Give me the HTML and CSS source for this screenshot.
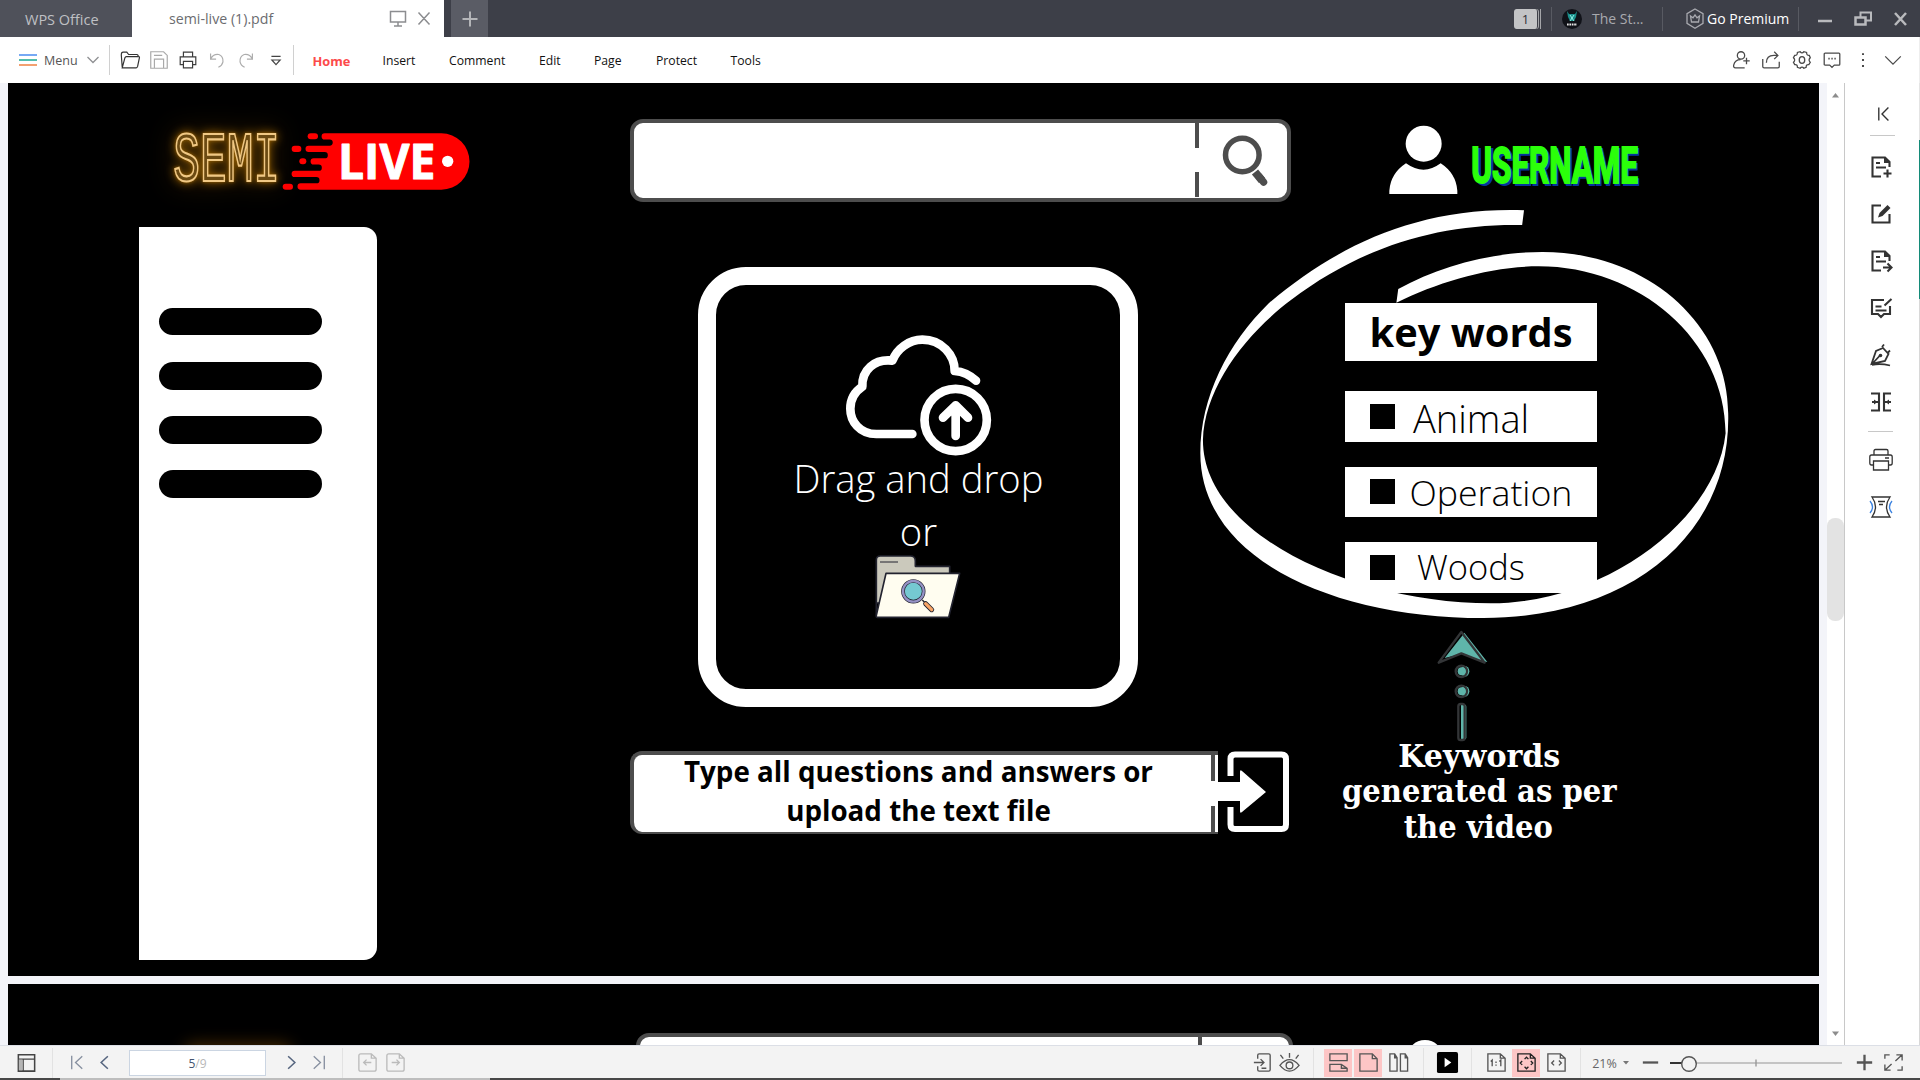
FILE: index.html
```html
<!DOCTYPE html>
<html lang="en">
<head>
<meta charset="utf-8">
<title>semi-live (1).pdf</title>
<link rel="stylesheet" href="styles.css">
</head>
<body>
<div class="app">
  <header class="titlebar">
    <div class="tab-office"><span>WPS Office</span></div>
    <div class="tab-file"><span>semi-live (1).pdf</span>
      <svg width="46" height="24" viewBox="0 0 46 24" fill="none" stroke="#8c8d90" stroke-width="1.5"><path d="M1.5 4.5h15v10.500h-15zM9 15v4M5 19h8M29.500 5.500l11 12M40.500 5.500l-11 12"/></svg>
    </div>
    <div class="tab-new"><svg width="16" height="16" viewBox="0 0 16 16" stroke="#b4b5b8" stroke-width="2"><path d="M0.500 8h15M8 .5v15"/></svg></div>
    <div class="titlebar-right">
      <div class="count"><b>1</b></div>
      <i class="vline"></i>
      <svg class="avatar" width="20" height="20" viewBox="0 0 20 20"><circle cx="10" cy="10" r="10" fill="#101218"/><path d="M5 2l2 3h6l2-3-1 6-2 4h-4L6 8z" fill="#1c8f8b"/><path d="M8 6l2 3 2-3M8 12l2-3 2 3" stroke="#8ff0e4" fill="none"/><path d="M5 15.500h10" stroke="#e8e8e8" stroke-width="2" stroke-dasharray="1.700 .7"/></svg>
      <span class="account">The St...</span>
      <i class="vline"></i>
      <svg class="crown" width="20" height="22" viewBox="0 0 20 22" fill="none" stroke="#a9aab0" stroke-width="1.300"><path d="M10 1l8 4.600v9.800l-8 4.800-8-4.800V5.600z"/><path d="M5.500 8l2.500 1.800 2-3 2 3L14.500 8l-1 6h-7z"/></svg>
      <span class="premium">Go Premium</span>
      <i class="vline"></i>
      <svg class="winbtns" width="92" height="20" viewBox="0 0 92 20" fill="none" stroke="#b9babd" stroke-width="2.500"><path d="M0 12h14" /><path d="M37.500 8.500h10v7h-10z"/><path d="M42.500 8V3.500H53v8h-5" stroke-width="2"/><path d="M77 4l11 12M88 4L77 16"/></svg>
    </div>
  </header>

  <nav class="toolbar">
    <svg class="burger" width="18" height="12" viewBox="0 0 18 12" stroke-width="1.500"><path d="M0 1h18" stroke="#4a8df0"/><path d="M0 6h18" stroke="#19a892"/><path d="M0 11h18" stroke="#ef8140"/></svg>
    <span class="menu">Menu</span>
    <svg class="menu-arrow" width="12" height="8" viewBox="0 0 12 8" fill="none" stroke="#8f9093" stroke-width="1.300"><path d="M.5 1L6 6.500 11.500 1"/></svg>
    <i class="rule"></i>
    <div class="quick">
      <svg viewBox="0 0 24 24" stroke="#333"><path d="M3.500 19.500l-1-13q0-3 2-3h4l2 2.500h9q1.500 0 1.500 2.500M3.500 20.500l3-11q.4-1.200 1.500-1.200h13.500q1 0 .8 1.200l-2 9.500q-.4 1.500-1.500 1.500z"/></svg>
      <svg viewBox="0 0 24 24" stroke="#a9a9a9"><path d="M3 3h14l4 4v14H3zM6.500 7h9M7 21V11h10v10"/></svg>
      <svg viewBox="0 0 24 24" stroke="#3c3c3c" stroke-width="1.500"><path d="M7 8V3.500h10V8M7 17H3.500V8.500h17V17H17M7 13.500h10v7H7z"/></svg>
      <svg viewBox="0 0 24 24" stroke="#adadad"><path d="M5 5v6h6M5 11q3-6 9-5 5 2 4.500 8-.8 4-5 6"/></svg>
      <svg viewBox="0 0 24 24" stroke="#adadad"><path d="M19 5v6h-6M19 11q-3-6-9-5-5 2-4.500 8 .8 4 5 6"/></svg>
      <svg viewBox="0 0 24 24" stroke="#444" stroke-width="1.500"><path d="M7 8h10M7.500 12l4.500 5 4.500-5z"/></svg>
    </div>
    <i class="rule"></i>
    <div class="menus"><b>Home</b><span>Insert</span><span>Comment</span><span>Edit</span><span>Page</span><span>Protect</span><span>Tools</span></div>
    <div class="tools">
      <svg viewBox="0 0 24 24"><circle cx="12" cy="7" r="4"/><path d="M16 20.500H6q-2.500 0-2-3 1.500-6 7.500-6M18 9.500v7M14.500 13h7"/></svg>
      <svg viewBox="0 0 24 24"><path d="M3 11v8q0 1.500 1.500 1.500h15q1.500 0 1.500-1.500v-5M7 15q0-8 8-8h4M15.500 3l4 4-4 4"/></svg>
      <svg viewBox="0 0 24 24"><path d="M10 3q2 2.500 4 0l3 .8q0 3.500 3 3.200l1 2.500q-2.500 2.500 0 5l-1.500 2.500q-3-.5-3 3L14 21q-2-2.500-4 0l-3-1q0-3.500-3-3l-1.300-2.500q2.600-2.500 0-5L4 7q3 .3 3-3.200z"/><ellipse cx="12" cy="12" rx="3" ry="3.600"/></svg>
      <svg viewBox="0 0 24 24"><path d="M4.500 4.500h15q1 0 1 1v11q0 1-1 1h-5L12 20l-2.500-2.500h-5q-1 0-1-1v-11q0-1 1-1z"/><path d="M8 10.500h1.500M11.300 10.500h1.500M14.600 10.500h1.500" stroke-width="1.700"/></svg>
      <svg viewBox="0 0 24 24"><path d="M12 4.500v2M12 11v2M12 17.500v2" stroke-width="2.200"/></svg>
      <svg viewBox="0 0 24 24"><path d="M3.500 8l8.500 8.500L20.500 8"/></svg>
    </div>
  </nav>

  <main class="workspace">
    <div class="viewer">
      <section class="slide">
        <header class="slide-head">
          <svg class="logo" viewBox="0 100 1140 378">
            <g class="neon"><text x="130" y="293" textLength="320" lengthAdjust="spacingAndGlyphs">SEMI</text></g>
            <path fill="#f00" transform="translate(0 49)" d="M934 100H584a9.250 9.250 0 0 0 0 18.500H599a9.250 9.250 0 0 1 0 18.500H536a9.500 9.500 0 0 0 0 19H584a9.500 9.500 0 0 1 0 19H551a9.250 9.250 0 0 0 0 18.500H566a9.500 9.500 0 0 1 0 19H494a9.250 9.250 0 0 0 0 18.500H559a9.500 9.500 0 0 1 0 19H512a9.500 9.500 0 0 0 0 19H934a84.500 84.500 0 0 0 0-169z"/>
            <g fill="#f00" transform="translate(0 49)"><rect x="533" y="100" width="31" height="18" rx="9"/><rect x="485" y="137" width="29" height="19" rx="9"/><rect x="508" y="175" width="21" height="18" rx="9"/><rect x="458" y="251" width="31" height="18" rx="9"/></g>
            <text class="live" x="624" y="286" textLength="292" lengthAdjust="spacingAndGlyphs">LIVE</text>
            <circle cx="953" cy="233" r="17" fill="#fff"/>
          </svg>
          <div class="search">
            <div class="search-field"></div>
            <svg width="90" height="74" viewBox="0 0 90 74" fill="none" stroke="#4d4d4d"><path d="M2 0v25M2 49v25" stroke-width="4"/><circle cx="47.300" cy="32" r="16.800" stroke-width="5.500"/><path d="M60 49l7 8.500" stroke-width="8" /><path d="M64 53.500l4.500 5.500" stroke-width="7.500" stroke-linecap="round"/></svg>
          </div>
          <svg class="user" viewBox="0 0 1200 300">
            <circle cx="191" cy="101" r="54" fill="#fff"/><path fill="#fff" d="M88 252v-10q4-52 50-82 53 38 104 0 46 30 50 82v10z"/>
            <text class="name shade" x="342" y="226" textLength="496" lengthAdjust="spacingAndGlyphs">USERNAME</text>
            <text class="name" x="334" y="219" textLength="500" lengthAdjust="spacingAndGlyphs">USERNAME</text>
          </svg>
        </header>
        <div class="slide-body">
          <aside class="side"><i></i><i></i><i></i><i></i></aside>
          <div class="center">
            <div class="drop">
              <svg class="cloud" width="148" height="124" viewBox="196 102 444 372" fill="none" stroke="#fff" stroke-width="26" stroke-linecap="round" stroke-linejoin="round"><path d="M398 402H290c-50 0-78-38-78-76 0-30 12-50 36-66-2-50 36-84 90-78 14-36 50-63 90-63 58 0 97 46 97 94 26 2 46 12 64 29"/><circle cx="528" cy="360" r="93.500"/><path d="M528 408v-92M490 353l38-37 37 37"/></svg>
              <p>Drag and drop<br>or</p>
              <svg class="folder" width="88" height="66" viewBox="284 764 264 198" stroke="#22232f" stroke-width="5" stroke-linejoin="round"><path fill="#cbc9bc" d="M291 948V782q0-12 12-12h90q15 0 15 15v16h103v30l-10 80H291z"/><path d="M302 788h54" stroke-width="3"/><path fill="#fffdf0" d="M320 822h221l-33 132H293q-3 0-2-6z"/><g><circle cx="402" cy="876" r="31" fill="#75c9d2" stroke-width="11"/><circle cx="402" cy="876" r="31" fill="none" stroke="#9592c5" stroke-width="7"/></g><path d="M429 902l8 8" stroke-width="4"/><path d="M439 913l18 18" stroke-width="15" stroke-linecap="round"/><path d="M439 913l18 18" stroke="#f8a567" stroke-width="10" stroke-linecap="round"/></svg>
            </div>
            <div class="ask">
              <div class="ask-field"><p>Type all questions and answers or<br>upload the text file</p><div class="ticks"><i></i><i></i></div></div>
              <svg width="72" height="82" viewBox="0 0 72 82"><path d="M12.500 25V8q0-4.500 4.500-4.500h46.500q4.500 0 4.500 4.500v65.500q0 4.500-4.500 4.500H17Q12.500 78 12.500 73.500V56" fill="none" stroke="#fff" stroke-width="6"/><path fill="#fff" d="M0 31h22V21q0-3 2-1l24 21-24 20q-2 2-2-1V50H0z"/></svg>
            </div>
          </div>
          <div class="words">
            <svg class="ring" viewBox="0 0 1568 1290" preserveAspectRatio="none"><path fill="#fff" d="M930 31C640 20 420 140 240 310C130 430 55 590 55 760C55 1080 420 1254 820 1254C1220 1254 1490 1000 1482 640C1482 370 1260 156 980 156C840 156 700 200 590 267L585 308C700 245 840 199 970 199C1240 199 1475 420 1475 700C1450 960 1150 1210 840 1210C480 1210 62 1010 62 720C66 560 180 400 300 300C490 140 700 70 925 75z"/></svg>
            <h2>key words</h2>
            <ul><li class="w1"><span>Animal</span></li><li class="w2"><span>Operation</span></li><li class="w3"><span>Woods</span></li></ul>
            <svg class="note" viewBox="0 0 960 720">
              <g fill="#5fb5aa"><path d="M433 38l69 88-12-2-66-22-50 12 55-70z"/><ellipse cx="435" cy="154" rx="13" ry="16"/><ellipse cx="435" cy="214" rx="13" ry="16"/><path d="M423 254h12q4 0 4 6v92q0 6-4 6h-12z"/></g>
              <g fill="none" stroke="#333537" stroke-width="7" stroke-linejoin="round"><path d="M424 36l70 92-70-28-68 28z"/><ellipse cx="424" cy="154" rx="17" ry="17"/><ellipse cx="424" cy="214" rx="17" ry="17"/><rect x="415" y="252" width="19" height="108" rx="7"/></g>
              <circle cx="425" cy="154" r="12" fill="#5fb5aa"/><circle cx="425" cy="214" r="12" fill="#5fb5aa"/>
              <g class="caption">
                <text x="235" y="440" textLength="486" lengthAdjust="spacingAndGlyphs">Keywords</text>
                <text x="66" y="546" textLength="824" lengthAdjust="spacingAndGlyphs">generated as per</text>
                <text x="251" y="654" textLength="448" lengthAdjust="spacingAndGlyphs">the video</text>
              </g>
            </svg>
          </div>
        </div>
      </section>
      <section class="slide next">
        <i class="glow"></i>
        <div class="next-search"><i></i></div>
        <i class="next-head"></i>
      </section>
    </div>
    <div class="scroll"><svg width="7" height="5" viewBox="0 0 7 5"><path d="M0 4.500h7L3.500 0z" fill="#8c8c8c"/></svg><i></i><svg width="7" height="5" viewBox="0 0 7 5"><path d="M0 .5h7L3.500 5z" fill="#8c8c8c"/></svg></div>
    <aside class="panel">
      <svg viewBox="0 0 24 24" class="fold"><path d="M8.500 5v14M19 5l-7 7 7 7" stroke-width="1.500"/></svg>
      <hr>
      <svg viewBox="0 0 24 24"><path d="M12 21.500H3.500v-19H16l4.500 4.500v5M7 8h4M7 12.500h10M18.500 14.500v8M14.500 18.500h8"/><path d="M15 2v6h6z" fill="#333" stroke="none"/></svg>
      <svg viewBox="0 0 24 24"><path d="M12 3.500H3.500v17h17V12"/><path d="M9 15.500l1.500-4.500L18.500 3l3 3-8 8z" fill="#333" stroke="none"/></svg>
      <svg viewBox="0 0 24 24"><path d="M12 21.500H3.500v-19H16l4.500 4.500v5M7 8h4M7 12.500h10M14 18.500h8M18.500 14.500l4 4-4 4"/><path d="M15 2v6h6z" fill="#333" stroke="none"/></svg>
      <svg viewBox="0 0 24 24"><path d="M15 4H3v14h6l3 3 3-3h6v-8M6.500 10.500h6M6.500 14.500h11M15.500 9.500L22.500 3"/></svg>
      <svg viewBox="0 0 24 24"><path d="M2.500 21L7 8l7-3 5.500 6L16 18zM3 21l8-8.500M13 4l2-2.500M18 10.500l3-3M3 22q8-2 18 .5" stroke-width="1.800"/><circle cx="11.500" cy="12.500" r="1.800" fill="#333" stroke="none"/></svg>
      <svg viewBox="0 0 24 24"><path d="M2 3.500h8v17H2M22 3.500h-7v17h7M3 12h7M22 12h-7"/><path d="M5 9.500L8.500 12 5 14.500zM20 9.500L16.500 12l3.500 2.500z" fill="#333" stroke="none"/></svg>
      <hr>
      <svg viewBox="0 0 24 24" class="thin"><path d="M5 7V3q0-1.500 1.500-1.500h11Q19 1.500 19 3v4M4.500 17H2.500Q.8 17 .8 15V9Q.8 7 2.500 7h19q1.700 0 1.700 2v6q0 2-1.700 2h-2M4.500 13h15v9h-15zM16 10h4"/></svg>
      <svg viewBox="0 0 24 24" class="thin"><path d="M3 2h18q-7 10 0 20H3q7-10 0-20zM9 6.500h7M10 9.500h4"/><path d="M1 6q5 6 0 12M23 6q-5 6 0 12" stroke="#3b82e0"/></svg>
    </aside>
  </main>

  <footer class="status">
    <div class="nav">
      <svg viewBox="0 0 24 24" stroke="#444"><path d="M3.500 4h17v17h-17z" stroke-width="1.600"/><path d="M3.500 8.500h17M8.500 8.500V21" /><path d="M4 9h4v11H4z" fill="#b5b5b5" stroke="none"/></svg>
      <i class="vr"></i>
      <svg viewBox="0 0 24 24"><path d="M7 5v14M18 5.500L11 12l7 6.500"/></svg>
      <svg viewBox="0 0 24 24" stroke="#56657f"><path d="M15.500 5.500L8.500 12l7 6.500" stroke-width="1.600"/></svg>
      <div class="pageno"><span>5</span>/9</div>
      <svg viewBox="0 0 24 24" stroke="#56657f"><path d="M8.500 5.500l7 6.500-7 6.500" stroke-width="1.600"/></svg>
      <svg viewBox="0 0 24 24"><path d="M17 5v14M6 5.500L13 12l-7 6.500"/></svg>
      <i class="vr"></i>
      <svg viewBox="0 0 24 24" stroke="#bbb"><path d="M5 3h11l5 4.500V19q0 2-2 2H5q-2 0-2-2V5q0-2 2-2zM8 12h8M11 9l-3 3 3 3M16 3v4.500h5"/></svg>
      <svg viewBox="0 0 24 24" stroke="#bbb"><path d="M5 3h11l5 4.500V19q0 2-2 2H5q-2 0-2-2V5q0-2 2-2zM8 12h8M13 9l3 3-3 3M16 3v4.500h5"/></svg>
    </div>
    <div class="view">
      <svg viewBox="0 0 24 24"><path d="M7 8V4.500Q7 3 8.500 3h10Q20 3 20 4.500v15q0 1.500-1.500 1.500h-10Q7 21 7 19.500V16M3 12h10M10 8.500l3.500 3.500-3.500 3.500M11 18h5"/></svg>
      <svg viewBox="0 0 24 24"><path d="M2 15q10-12 20 0-10 12-20 0zM12 7V2M5.500 8l-3-4M18.500 8l3-4"/><circle cx="12" cy="15" r="3.500"/></svg>
      <i class="vr"></i>
      <div class="on"><svg viewBox="0 0 24 24"><path d="M3 3h18v7H3zM3 21v-7h12l6 4v3zM15 14v4h6"/></svg></div>
      <div class="on"><svg viewBox="0 0 24 24"><path d="M3 3h13l5 5v13H3zM16 3v5h5"/></svg></div>
      <svg viewBox="0 0 24 24"><path d="M3 3h5l2.500 4v14H3zM14 3h5l2.500 4v14H14zM8 3v4h2.500M19 3v4h2.500"/></svg>
      <i class="vr"></i>
      <svg viewBox="0 0 24 24" class="play"><rect x="1" y="1" width="22" height="22" rx="2" fill="#000" stroke="none"/><path d="M9 7l7 5-7 5z" fill="#fff" stroke="none"/></svg>
      <i class="vr"></i>
      <svg viewBox="0 0 24 24"><path d="M3 3h13l5 4.500V21H3zM16 3v4.500h5M7.500 16V9.500L6 11M16.500 16V9.500L15 11M11.500 11v1.500M11.500 14v1.500"/></svg>
      <div class="on"><svg viewBox="0 0 24 24" stroke="#222"><path d="M3 3h13l5 4.500V21H3zM16 3v4.500h5M10 8.500L12 6.500l2 2M10 16.500l2 2 2-2M7.500 10.500l-2 2 2 2M16.500 10.500l2 2-2 2"/></svg></div>
      <svg viewBox="0 0 24 24"><path d="M3 3h13l5 4.500V21H3zM16 3v4.500h5M9.500 10l-2.500 2.500L9.500 15M14.500 10l2.500 2.500-2.500 2.500"/></svg>
      <i class="vr"></i>
      <span class="pct">21%</span>
      <svg class="caret" viewBox="0 0 8 5"><path d="M1 1h6L4 4.500z" fill="#777" stroke="none"/></svg>
      <svg viewBox="0 0 24 24"><path d="M4 12h16" stroke-width="2.400"/></svg>
      <svg class="slider" viewBox="0 0 180 20"><path d="M4 10h172" stroke="#b5b5b5" stroke-width="1.500"/><path d="M4 10h12" stroke="#333" stroke-width="2"/><path d="M90 6.500v7" stroke="#999"/><circle cx="23" cy="11" r="7.300" fill="#f3f3f3"/></svg>
      <svg viewBox="0 0 24 24"><path d="M4 12h16M12 4v16" stroke-width="2.400"/></svg>
      <svg viewBox="0 0 24 24"><path d="M15 4h6v6M21 4l-7 6.500M9 20H3v-6M3 20l7-6.500M3 8V4h5M21 16v4h-5"/></svg>
    </div>
  </footer>
</div>
</body>
</html>
```
FILE: styles.css
```css
* { box-sizing: border-box; }
body { margin: 0; overflow: hidden; font-family: "Open Sans", "Noto Sans", sans-serif; font-size: 12px; }
svg { display: block; flex: none; }
i { display: block; flex: none; }
.app { width: 1920px; height: 1080px; display: flex; flex-direction: column; background: #f3f4f9; }

/* title bar */
.titlebar { height: 37px; flex: none; display: flex; background: #3d3f48; font-size: 14px; white-space: nowrap; }
.tab-office { width: 132px; background: #4f515a; color: #bfc0c4; line-height: 39px; padding-left: 25px; font-size: 14.500px; }
.tab-file { width: 312px; background: #fff; color: #6b6c70; line-height: 39px; padding: 0 11px 0 37px; display: flex; justify-content: space-between; align-items: center; }
.tab-file span { font-size: 14.200px; }
.tab-file svg { margin-right: -2px; }
.tab-new { width: 37px; margin-left: 7px; background: #5a5c65; display: grid; place-items: center; }
.titlebar-right { margin-left: auto; display: flex; align-items: center; color: #a9aaaf; }
.vline { width: 1px; height: 24px; background: #585a62; }
.count { width: 27px; height: 20px; margin-right: 10px; border-right: 1px solid #a5a6a9; padding-right: 2px; display: flex; }
.count b { flex: 1; border-right: 1px solid #3d3f48; border-radius: 3px; background: #c3c4c6; color: #2f3036; font-size: 13px; font-weight: 400; line-height: 20px; text-align: center; box-shadow: 1px 0 #a5a6a9; }
.avatar { margin-left: 10px; }
.account { width: 80px; padding-left: 10px; line-height: 39px; }
.crown { margin-left: 22px; }
.premium { width: 93px; padding-left: 2px; color: #fff; line-height: 39px; }
.winbtns { margin: 0 10px 0 19px; }

/* toolbar */
.toolbar { height: 46px; flex: none; display: flex; align-items: center; background: #fff; color: #111; border-right: 1px solid #eee; }
.burger { margin-left: 19px; }
.menu { width: 57px; padding-left: 7px; font-size: 12.5px; color: #555; line-height: 47px; }
.menu-arrow { margin: 0 10px 0 -7px; }
.rule { width: 1px; height: 30px; background: #d0d0d0; }
.quick { width: 175px; margin: 0 3px 0 5px; display: grid; grid-template-columns: repeat(6, 29.2px); justify-items: center; }
.quick svg { width: 22px; height: 22px; fill: none; stroke-width: 1.3; }
.menus { margin-left: 18.500px; display: grid; grid-template-columns: 70px 66.5px 90px 55px 62px 74.5px 60px; line-height: 50px; font-size: 12.2px; padding-top: 2px; }
.menus b { color: #fc4a4a; font-size: 12.800px; }
.tools { margin-left: auto; margin-right: 11px; display: grid; grid-template-columns: 30px 31px repeat(4, 30.3px); justify-items: center; }
.tools svg { width: 22px; height: 22px; fill: none; stroke: #4a4a4a; stroke-width: 1.4; }

/* document */
.workspace { height: 962px; flex: none; display: flex; }
.viewer { width: 1827px; padding-left: 8px; overflow: hidden; background: #f3f4f9; }
.slide { width: 1811px; height: 893px; background: #000; position: relative; }
.slide-head { height: 143.500px; display: flex; align-items: flex-start; }
.logo { width: 380px; height: 126px; margin: 34px 0 0 122px; overflow: visible; }
.neon { filter: drop-shadow(0 0 5px #8a5800) drop-shadow(0 0 14px #8a5800) drop-shadow(0 0 40px #2a1900); }
.neon text { font: 400 212px "Liberation Mono", monospace; fill: #6b4a12; stroke: #f0c884; stroke-width: 6.500px; }
.live { font: 700 147px "Open Sans", sans-serif; fill: #fff; stroke: #fff; stroke-width: 3px; stroke-linejoin: round; }
.search { width: 661px; height: 83px; margin: 36px 0 0 120px; border: 4px solid #4d4d4d; border-radius: 13px; background: #fff; display: flex; }
.search-field { width: 561px; }
.user { width: 400px; height: 100px; margin: 27px 0 0 69px; overflow: visible; }
.name { font: 700 150px "Roboto", sans-serif; fill: #2bff0a; stroke: #2bff0a; stroke-width: 6px; }
.name.shade { fill: #06349c; stroke: #06349c; }
.slide-body { display: flex; align-items: flex-start; }
.side { width: 238px; height: 733.500px; margin-left: 130.500px; padding: 81px 0 0 20.500px; background: #fff; border-radius: 0 13px 13px 0; display: flex; flex-direction: column; gap: 26.500px; }
.side i { width: 163px; height: 27.800px; border-radius: 14px; background: #000; }
.center { width: 661px; margin-left: 253.500px; padding-top: 40px; }
.drop { width: 440px; height: 440px; margin-left: 68px; border: 18px solid #fff; border-radius: 48px; color: #fff; display: flex; flex-direction: column; align-items: center; padding-top: 49px; }
.cloud { margin-left: 2px; }
.drop p { margin: -5.500px 0 0 1px; font-size: 38.200px; font-weight: 300; line-height: 53px; text-align: center; white-space: nowrap; }
.folder { margin: -4px 0 0; }
.ask { display: flex; margin-top: 44px; }
.ask-field { width: 588px; height: 83px; border: 4px solid #4d4d4d; border-right: 0; border-bottom-width: 2px; border-radius: 12px 0 0 12px; background: #fff; display: flex; justify-content: space-between; }
.ask-field p { flex: 1; margin: -3px 0 0; padding: 0 8px 0 0; font-size: 27.750px; font-weight: 700; line-height: 39px; text-align: center; white-space: nowrap; }
.ticks { width: 7px; display: flex; flex-direction: column; justify-content: space-between; }
.ticks i { width: 4px; height: 26px; background: #4d4d4d; }
.words { width: 340px; margin-left: 8px; padding: 76.500px 0 0 46px; position: relative; }
.ring { position: absolute; left: -119px; top: -26.500px; width: 580px; height: 430px; }
.words h2 { position: relative; width: 252px; height: 58px; margin: 0 0 30px; background: #fff; font-size: 39.800px; line-height: 57px; text-align: center; white-space: nowrap; }
.words ul { position: relative; width: 252px; margin: 0; padding: 0; list-style: none; display: grid; gap: 25px; }
.words li { height: 50.500px; background: #fff; display: flex; align-items: center; font-weight: 300; font-size: 38px; line-height: 50px; }
.words li::before { content: ""; width: 25px; height: 25px; margin: 0 15px 0 25px; background: #000; }
.words .w1::before { margin-right: 18px; }
.words .w1 span { padding-top: 4px; }
.words .w2 { font-size: 35.700px; }
.words .w2::before { margin-right: 14.500px; }
.words .w3 { font-size: 34.500px; }
.words .w3::before { margin-right: 22px; }
.note { width: 320px; height: 240px; margin: 27px 0 0 -25px; overflow: visible; }
.caption text { font: 700 95px "DejaVu Serif", serif; fill: #fff; }
.slide.next { height: 61px; margin-top: 8px; overflow: hidden; display: flex; }
.next-search { width: 657px; height: 80px; margin: 49px 0 0 628px; border: 4px solid #4d4d4d; border-radius: 13px; background: #fff; }
.next-search i { width: 4px; height: 25px; margin-left: 558px; background: #4d4d4d; }
.next-head { width: 36px; height: 36px; margin: 56px 0 0 114px; border-radius: 50%; background: #fff; }
.glow { position: absolute; left: 180px; top: 64px; width: 100px; height: 10px; box-shadow: 0 0 16px 4px #4a2c00; border-radius: 8px; }
.scroll { width: 18px; background: #fff; border-right: 1px solid #c8c8c8; display: flex; flex-direction: column; align-items: center; padding: 10px 0 9px; }
.scroll i { width: 17px; height: 103px; margin: 420px 0 auto; border-radius: 8px; background: #e3e3e3; }
.panel { width: 75px; background: #fff; border-right: 1px solid; border-image: linear-gradient(#e4e4e4 58px, #148a78 58px, #148a78 217px, #d8d8d8 217px) 1; display: flex; flex-direction: column; align-items: center; padding-top: 20px; }
.panel svg { width: 24px; height: 24px; margin-bottom: 23px; margin-right: 3px; fill: none; stroke: #333; stroke-width: 2.100; }
.panel .fold { margin-bottom: 10px; margin-right: 0; width: 22px; height: 22px; }
.panel .thin { stroke-width: 1.300; }
.panel hr { width: 25px; height: 1px; margin: 0 0 19px; border: 0; background: #c8c8c8; flex: none; }
.panel svg + hr:not(:nth-child(2)) { margin: -6px 3px 16px 0; }

/* status bar */
.status { height: 35px; flex: none; background: linear-gradient(90deg, #484848 60px, #bdbdbd 60px, #bdbdbd 490px, #484848 490px) 0 100% / 100% 2px no-repeat #f3f3f3; border-top: 1px solid #dcdfe6; display: flex; justify-content: space-between; padding-bottom: 1px; }
.status svg { width: 23px; height: 23px; fill: none; stroke-width: 1.400; }
.nav, .view { display: grid; align-items: center; justify-items: center; }
.nav { stroke: #8790a0; grid-template-columns: 52px 1px 46px 10px 177px 10px 46px 1px 48px 8px; }
.vr { width: 1px; height: 30px; background: #e2e2e2; }
.pageno { width: 137px; height: 26px; border: 1px solid #cbd5e2; background: #fff; text-align: center; line-height: 25px; color: #b8b8b8; }
.pageno span { color: #44536e; }
.view { stroke: #555; grid-template-columns: 26px 27px 21px 29.5px 30px 30px 20px 28px 20px 30px 30px 30px 18px 31px 12px 36px 176px 41px 16px; padding-right: 19px; }
.on { width: 28px; height: 28px; background: #fdc6c6; display: grid; place-items: center; }
.pct { font-size: 12.500px; color: #666; padding-top: 1px; }
.status .caret { width: 8px; height: 5px; }
.status .slider { width: 180px; height: 20px; }
```
